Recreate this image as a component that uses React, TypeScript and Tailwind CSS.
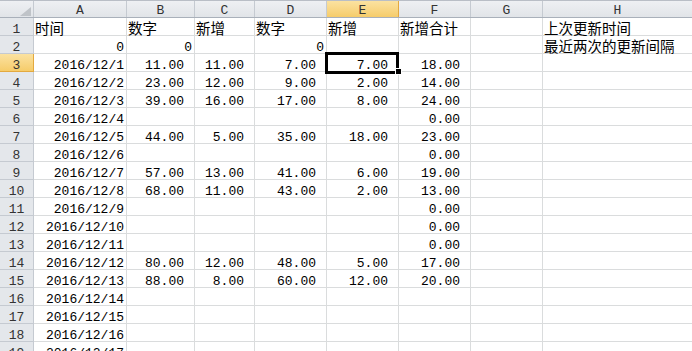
import React from "react";

type Row = { n: number; a?: string; b?: string; c?: string; d?: string; e?: string; f?: string; h?: string };

const rows: Row[] = [
  { n: 1, a: "时间", b: "数字", c: "新增", d: "数字", e: "新增", f: "新增合计", h: "上次更新时间" },
  { n: 2, a: "0", b: "0", d: "0", h: "最近两次的更新间隔" },
  { n: 3, a: "2016/12/1", b: "11.00", c: "11.00", d: "7.00", e: "7.00", f: "18.00" },
  { n: 4, a: "2016/12/2", b: "23.00", c: "12.00", d: "9.00", e: "2.00", f: "14.00" },
  { n: 5, a: "2016/12/3", b: "39.00", c: "16.00", d: "17.00", e: "8.00", f: "24.00" },
  { n: 6, a: "2016/12/4", f: "0.00" },
  { n: 7, a: "2016/12/5", b: "44.00", c: "5.00", d: "35.00", e: "18.00", f: "23.00" },
  { n: 8, a: "2016/12/6", f: "0.00" },
  { n: 9, a: "2016/12/7", b: "57.00", c: "13.00", d: "41.00", e: "6.00", f: "19.00" },
  { n: 10, a: "2016/12/8", b: "68.00", c: "11.00", d: "43.00", e: "2.00", f: "13.00" },
  { n: 11, a: "2016/12/9", f: "0.00" },
  { n: 12, a: "2016/12/10", f: "0.00" },
  { n: 13, a: "2016/12/11", f: "0.00" },
  { n: 14, a: "2016/12/12", b: "80.00", c: "12.00", d: "48.00", e: "5.00", f: "17.00" },
  { n: 15, a: "2016/12/13", b: "88.00", c: "8.00", d: "60.00", e: "12.00", f: "20.00" },
  { n: 16, a: "2016/12/14" },
  { n: 17, a: "2016/12/15" },
  { n: 18, a: "2016/12/16" },
  { n: 19, a: "2016/12/17" },
];

const isCJK = (s: string) => /[\u4e00-\u9fff]/.test(s);

function Cell({ w, v }: { w: string; v?: string }) {
  let inner: React.ReactNode = null;
  let align = "justify-start";
  if (v !== undefined) {
    if (isCJK(v)) {
      align = "justify-start pl-[1px]";
      inner = (
        <span className="font-['Noto_Sans_CJK_SC',sans-serif] text-[14.5px] leading-[15px] whitespace-nowrap text-black">
          {v}
        </span>
      );
    } else {
      align = v.includes(".") ? "justify-end pr-[10px]" : "justify-end pr-[2px]";
      inner = (
        <span className="font-['Liberation_Mono',monospace] text-[13px] leading-[10px] whitespace-nowrap text-black">
          {v}
        </span>
      );
    }
  }
  return (
    <div className={`${w} h-[18px] shrink-0 border-r border-b border-[#dadcdd] flex items-end ${align}`}>
      {inner}
    </div>
  );
}

function ColHead({ w, label, active }: { w: string; label: string; active?: boolean }) {
  return (
    <div
      className={`${w} h-full shrink-0 border-r flex items-end justify-center ${
        active
          ? "bg-gradient-to-b from-[#fbe2a0] to-[#f6cc6a] border-[#e3a93f]"
          : "bg-gradient-to-b from-[#eef0f3] to-[#e1e4e8] border-[#c5cad1]"
      }`}
    >
      <span className="font-['Liberation_Mono',monospace] text-[13px] leading-[10px] text-[#333] mb-[1px]">{label}</span>
    </div>
  );
}

export default function App() {
  return (
    <div className="relative w-[692px] h-[351px] overflow-hidden bg-white">
      {/* column headers */}
      <div className="flex h-[18px] border-t border-[#b9bec6] border-b border-b-[#a9b0ba]">
        <div className="w-[34px] h-full shrink-0 border-r border-[#c5cad1] bg-gradient-to-b from-[#eef0f3] to-[#e1e4e8] flex items-end justify-end pr-[2px] pb-[1px]">
          <svg width="11" height="9" viewBox="0 0 11 9">
            <polygon points="11,0 11,9 0,9" fill="#bfc3c8" />
          </svg>
        </div>
        <ColHead w="w-[93px]" label="A" />
        <ColHead w="w-[68px]" label="B" />
        <ColHead w="w-[60px]" label="C" />
        <ColHead w="w-[72px]" label="D" />
        <ColHead w="w-[72px]" label="E" active />
        <ColHead w="w-[72px]" label="F" />
        <ColHead w="w-[72px]" label="G" />
        <ColHead w="w-[150px]" label="H" />
      </div>
      {rows.map((r) => (
        <div key={r.n} className="flex h-[18px]">
          <div
            className={`w-[34px] h-[18px] shrink-0 border-r border-b flex items-end justify-center ${
              r.n === 3
                ? "bg-gradient-to-b from-[#fbe2a0] to-[#f6cc6a] border-[#e3a93f]"
                : "bg-[#e4e7eb] border-[#c5cad1]"
            }`}
          >
            <span className="font-['Liberation_Mono',monospace] text-[13px] leading-[10px] text-[#333]">{r.n}</span>
          </div>
          <Cell w="w-[93px]" v={r.a} />
          <Cell w="w-[68px]" v={r.b} />
          <Cell w="w-[60px]" v={r.c} />
          <Cell w="w-[72px]" v={r.d} />
          <Cell w="w-[72px]" v={r.e} />
          <Cell w="w-[72px]" v={r.f} />
          <Cell w="w-[72px]" />
          <Cell w="w-[150px]" v={r.h} />
        </div>
      ))}
      {/* active cell E3 */}
      <div className="absolute left-[325px] top-[52px] w-[74px] h-[22px] border-[3px] border-black pointer-events-none" />
      <div className="absolute left-[395px] top-[68px] w-[7px] h-[7px] bg-black border border-white" />
    </div>
  );
}
